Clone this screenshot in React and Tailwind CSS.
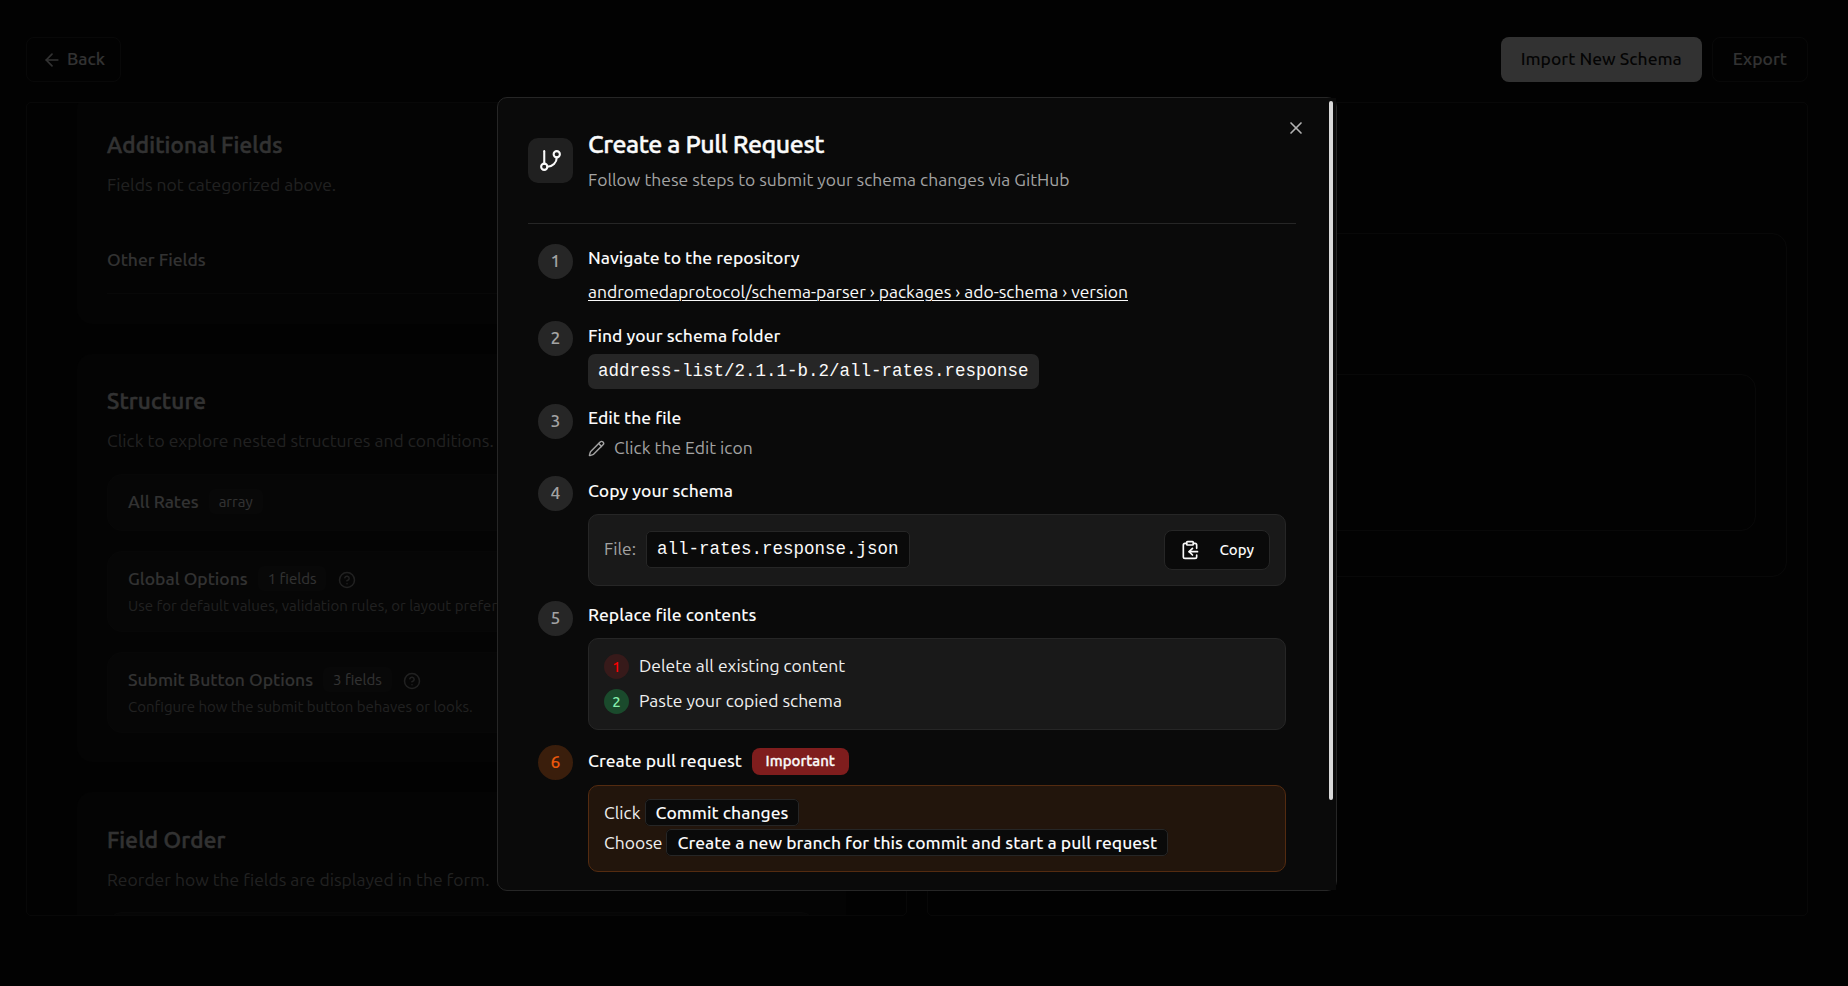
import { ArrowLeft, CircleHelp, ClipboardCopy, GitBranch, Pencil, X } from "lucide-react";

function Heading({ title, sub }) {
  return (
    <div className="flex flex-col">
      <h3 className="text-[22.5px] leading-[30px] font-medium tracking-[0.17px] [-webkit-text-stroke:0.4px_currentColor]">
        {title}
      </h3>
      <p className="mt-[12px] text-[17.5px] leading-[25px] text-[#a3a3a3]">{sub}</p>
    </div>
  );
}

function Item({ title, badge, hint, className }) {
  return (
    <div
      className={`flex flex-col rounded-[15px] border border-[#262626] bg-[#1e1e1e] px-[20px] pt-[14px] ${className}`}
    >
      <div className="flex h-[25px] items-center">
        <span className="text-[17.5px] leading-[25px] font-medium">{title}</span>
        <span className="ml-[10px] flex h-[25px] items-center rounded-[6px] bg-[#282828] px-[10px] text-[15px] leading-[20px]">
          {badge}
        </span>
        {hint && <CircleHelp className="mt-[2px] ml-[11.5px] size-[18px] text-[#a3a3a3]" strokeWidth={2} />}
      </div>
      {hint && <p className="mt-[5px] truncate text-[15px] leading-[20px] text-[#a3a3a3]">{hint}</p>}
    </div>
  );
}

function Page() {
  return (
    <div className="flex h-[986px] flex-col bg-[#0a0a0a] pr-[40px] pl-[26px] pt-[37px]">
      <header className="flex h-[45px] items-center gap-[10px] text-[17.5px] leading-[25px] font-medium">
        <button className="flex h-[45px] items-center gap-[5px] rounded-[8px] border border-[#2c2c2c] px-[15px]">
          <ArrowLeft className="size-[20px]" />
          <span className="-mt-[2px]">Back</span>
        </button>
        <button className="ml-auto h-[45px] rounded-[8px] bg-[#fafafa] px-[20px] pb-[2px] text-[#171717]">
          Import New Schema
        </button>
        <button className="h-[45px] rounded-[8px] border border-[#2c2c2c] px-[20px] pb-[2px]">Export</button>
      </header>

      <main className="mt-[20px] flex h-[814px] gap-[20px]">
        <section className="flex w-[881px] shrink-0 flex-col gap-[30px] overflow-hidden rounded-[5px] border border-[#2c2c2c] pr-[60px] pl-[50px]">
          <div className="-mt-[9px] flex h-[230px] shrink-0 flex-col rounded-[15px] bg-[#141414] px-[30px] pt-[36px]">
            <Heading title="Additional Fields" sub="Fields not categorized above." />
            <h4 className="mt-[50px] border-b border-[#2c2c2c] pb-[21px] text-[17.5px] leading-[25px] font-medium">
              Other Fields
            </h4>
          </div>
          <div className="flex h-[408px] shrink-0 flex-col rounded-[15px] bg-[#141414] px-[30px] pt-[32px]">
            <Heading title="Structure" sub="Click to explore nested structures and conditions." />
            <Item className="mt-[21px] h-[57px]" title="All Rates" badge="array" />
            <Item
              className="mt-[20px] h-[81px]"
              title="Global Options"
              badge="1 fields"
              hint="Use for default values, validation rules, or layout preferences."
            />
            <Item
              className="mt-[20px] h-[81px]"
              title="Submit Button Options"
              badge="3 fields"
              hint="Configure how the submit button behaves or looks."
            />
          </div>
          <div className="flex h-[400px] shrink-0 flex-col rounded-[15px] bg-[#141414] px-[30px] pt-[33px]">
            <Heading title="Field Order" sub="Reorder how the fields are displayed in the form." />
            <div className="mt-[20px] h-[200px] rounded-[15px] border border-[#2a2a2a] bg-[#1e1e1e]" />
          </div>
        </section>

        <section className="flex-1 rounded-[5px] border border-[#2c2c2c] px-[20px] pt-[130px]">
          <div className="h-[344px] rounded-[15px] border border-[#2c2c2c] px-[30px] pt-[140px]">
            <div className="h-[157px] rounded-[15px] border border-[#2c2c2c]" />
          </div>
        </section>
      </main>
    </div>
  );
}

function Step({ number, accent, className, children }) {
  return (
    <li className={`flex items-start gap-[15px] ${className}`}>
      <span
        className={`flex size-[35px] shrink-0 items-center justify-center rounded-full pb-[2px] text-[17.5px] leading-[25px] font-medium ${
          accent ? "bg-[#3a1e0c] text-[#ea580c]" : "bg-[#262626] text-[#a3a3a3]"
        }`}
      >
        {number}
      </span>
      <div className="flex min-w-0 flex-1 flex-col items-start">{children}</div>
    </li>
  );
}

function StepTitle({ className, children }) {
  return <h3 className={`text-[17.5px] leading-[25px] font-medium ${className}`}>{children}</h3>;
}

function Chip({ children }) {
  return (
    <span className="rounded-[5px] border border-[#262626] bg-[#0a0a0a] px-[10px] py-[3px] font-medium text-[#fafafa]">
      {children}
    </span>
  );
}

function Dialog() {
  return (
    <div
      role="dialog"
      className="absolute top-[97px] left-[497px] h-[794px] w-[840px] rounded-[10px] border border-[#262626] bg-[#0a0a0a]"
    >
      <div className="h-full overflow-hidden pt-[30px] pr-[40px] pl-[30px]">
        <div className="flex h-[96px] items-start gap-[15px] border-b border-[#262626]">
          <div className="mt-[10px] flex size-[45px] items-center justify-center rounded-[10px] bg-[#202020]">
            <GitBranch className="size-[25px]" />
          </div>
          <div className="flex flex-col">
            <h2 className="text-[25px] leading-[32px] font-medium tracking-[-0.455px] [-webkit-text-stroke:0.4px_currentColor]">
              Create a Pull Request
            </h2>
            <p className="mt-[7px] text-[17.5px] leading-[25px] text-[#a3a3a3]">
              Follow these steps to submit your schema changes via GitHub
            </p>
          </div>
        </div>

        <ol className="mt-[20px] flex flex-col px-[10px]">
          <Step number="1" className="h-[77px]">
            <StepTitle className="mt-[1px]">Navigate to the repository</StepTitle>
            <a className="mt-[9px] text-[17.5px] leading-[25px] underline decoration-1 underline-offset-2">
              andromedaprotocol/schema-parser › packages › ado-schema › version
            </a>
          </Step>
          <Step number="2" className="h-[83px]">
            <StepTitle className="mt-[2px]">Find your schema folder</StepTitle>
            <code className="mt-[6px] h-[35px] rounded-[7px] bg-[#262626] px-[10px] text-[17.5px] leading-[35px] font-['Liberation_Mono',monospace]">
              address-list/2.1.1-b.2/all-rates.response
            </code>
          </Step>
          <Step number="3" className="h-[72px]">
            <StepTitle className="mt-[1px]">Edit the file</StepTitle>
            <p className="mt-[5px] flex items-center gap-[9.5px] text-[17.5px] leading-[25px] text-[#a3a3a3]">
              <Pencil className="mt-[2px] -ml-[0.5px] size-[17px]" />
              Click the Edit icon
            </p>
          </Step>
          <Step number="4" className="h-[125px]">
            <StepTitle className="mt-[2px]">Copy your schema</StepTitle>
            <div className="mt-[11px] flex h-[72px] w-full items-center rounded-[10px] border border-[#262626] bg-[#191919] px-[15px]">
              <span className="-mt-[3px] text-[17.5px] leading-[25px] text-[#a3a3a3]">File:</span>
              <code className="-mt-[1px] ml-[10px] h-[37px] rounded-[5px] border border-[#262626] bg-[#0a0a0a] px-[10px] text-[17.5px] leading-[34px] font-['Liberation_Mono',monospace]">
                all-rates.response.json
              </code>
              <button className="ml-auto flex h-[40px] items-center gap-[20px] rounded-[8px] border border-[#262626] bg-[#0a0a0a] px-[15px] text-[15px] leading-[20px] font-medium">
                <ClipboardCopy className="size-[20px]" />
                Copy
              </button>
            </div>
          </Step>
          <Step number="5" className="h-[144px]">
            <StepTitle className="mt-[1px]">Replace file contents</StepTitle>
            <div className="mt-[11px] flex h-[92px] w-full flex-col gap-[10px] rounded-[10px] border border-[#262626] bg-[#191919] p-[15px] text-[17.5px] leading-[25px] text-[#f0f0f0]">
              <p className="flex items-center gap-[10px]">
                <span className="flex size-[25px] items-center justify-center rounded-full bg-[#371a1a] text-[15px] leading-[20px] font-medium text-[#ff0000]">
                  1
                </span>
                <span className="-mt-[2px]">Delete all existing content</span>
              </p>
              <p className="flex items-center gap-[10px]">
                <span className="flex size-[25px] items-center justify-center rounded-full bg-[#1a4a2c] text-[15px] leading-[20px] font-medium text-[#86efac]">
                  2
                </span>
                <span className="-mt-[2px]">Paste your copied schema</span>
              </p>
            </div>
          </Step>
          <Step number="6" accent className="h-[137px]">
            <div className="mt-[3px] flex h-[27px] items-center gap-[10px]">
              <StepTitle className="-mt-[3px]">Create pull request</StepTitle>
              <span className="h-[27px] rounded-[8px] bg-[#7f1d1d] px-[13.5px] text-[15px] leading-[25px] font-medium [-webkit-text-stroke:0.3px_currentColor]">
                Important
              </span>
            </div>
            <div className="mt-[10px] flex h-[87px] w-full flex-col gap-[5px] rounded-[10px] border border-[#542b10] bg-[#22150c] px-[15px] pt-[14px] text-[17.5px] leading-[25px] text-[#f0f0f0]">
              <p>
                Click <Chip>Commit changes</Chip>
              </p>
              <p>
                Choose <Chip>Create a new branch for this commit and start a pull request</Chip>
              </p>
            </div>
          </Step>
        </ol>
      </div>

      <div className="absolute top-0 right-0 h-full w-[10px] bg-[#0a0a0a]">
        <div className="mt-[3px] ml-[3px] h-[699px] w-[4px] rounded-full bg-[#d9d9d9]" />
      </div>
      <button aria-label="Close" className="absolute top-[20px] right-[30px] text-[#b2b2b2]">
        <X className="size-[20px]" />
      </button>
    </div>
  );
}

export default function App() {
  return (
    <div className="relative h-[986px] w-[1848px] overflow-hidden bg-black font-[Ubuntu,'Noto_Sans',sans-serif] text-[#fafafa]">
      <Page />
      <div className="absolute inset-0 bg-black/80" />
      <Dialog />
    </div>
  );
}
